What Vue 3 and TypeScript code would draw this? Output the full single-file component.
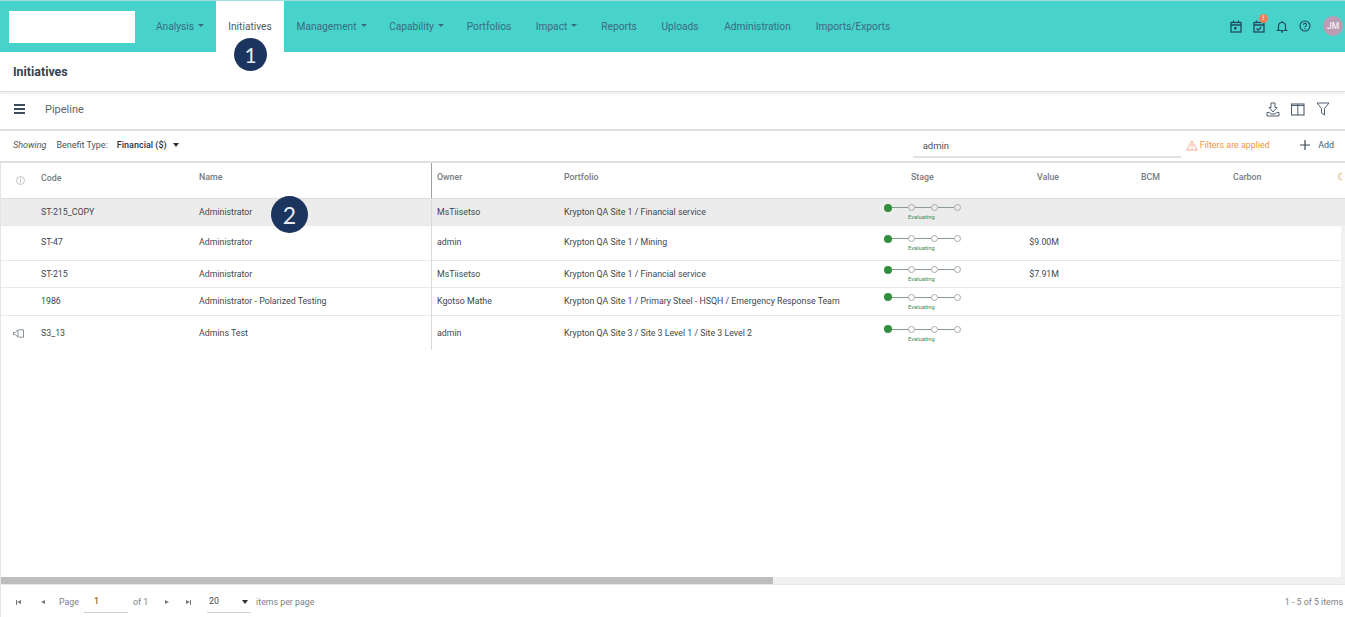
<script setup lang="ts">
interface Row { code: string; name: string; owner: string; portfolio: string; value: string; height: number; active?: boolean; flag?: boolean; low?: boolean }
const navItems: { label: string; caret?: boolean; active?: boolean; width: number }[] = [
  { label: 'Analysis', caret: true, width: 72 },
  { label: 'Initiatives', active: true, width: 68 },
  { label: 'Management', caret: true, width: 95 },
  { label: 'Capability', caret: true, width: 75 },
  { label: 'Portfolios', width: 70 },
  { label: 'Impact', caret: true, width: 65 },
  { label: 'Reports', width: 60 },
  { label: 'Uploads', width: 62 },
  { label: 'Administration', width: 93 },
  { label: 'Imports/Exports', width: 98 },
]
const rows: Row[] = [
  { code: 'ST-215_COPY', name: 'Administrator', owner: 'MsTiisetso', portfolio: 'Krypton QA Site 1 / Financial service', value: '', height: 27, active: true, low: true },
  { code: 'ST-47', name: 'Administrator', owner: 'admin', portfolio: 'Krypton QA Site 1 / Mining', value: '$9.00M', height: 35 },
  { code: 'ST-215', name: 'Administrator', owner: 'MsTiisetso', portfolio: 'Krypton QA Site 1 / Financial service', value: '$7.91M', height: 27, low: true },
  { code: '1986', name: 'Administrator - Polarized Testing', owner: 'Kgotso Mathe', portfolio: 'Krypton QA Site 1 / Primary Steel - HSQH / Emergency Response Team', value: '', height: 28 },
  { code: 'S3_13', name: 'Admins Test', owner: 'admin', portfolio: 'Krypton QA Site 3 / Site 3 Level 1 / Site 3 Level 2', value: '', height: 35, flag: true },
]
</script>

<template>
  <div class="page">
    <header class="nav">
      <div class="logo"></div>
      <nav class="menu">
        <a v-for="item in navItems" :key="item.label" class="menu-item" :class="{ active: item.active }" :style="{ width: item.width + 'px' }">
          {{ item.label }}<i v-if="item.caret" class="caret"></i>
        </a>
      </nav>
      <div class="nav-icons">
        <svg width="12" height="13" viewBox="0 0 12 13" fill="none" stroke="#1f4a63" stroke-width="1.3"><rect x="1" y="2.5" width="10" height="9.5"/><path d="M1 5h10M3.5 .5v2M8.500 .5v2"/><rect x="4" y="7" width="2.500" height="2.500" fill="#1f4a63" stroke="none"/></svg>
        <span class="task">
          <svg width="12" height="13" viewBox="0 0 12 13" fill="none" stroke="#1f4a63" stroke-width="1.3"><rect x="1" y="2.500" width="10" height="9.500"/><path d="M1 5h10M3.500 .5v2M8.500 .5v2M3.500 8.500l1.700 1.500 3-3"/></svg>
          <b class="badge">!</b>
        </span>
        <svg width="12" height="13" viewBox="0 0 12 13" fill="none" stroke="#1f4a63" stroke-width="1.2"><path d="M2.500 9.500V6a3.500 3.500 0 0 1 7 0v3.500l1 1h-9zM5 11.800h2M6 1v1"/></svg>
        <svg class="help" width="12" height="12" viewBox="0 0 12 12" fill="none" stroke="#1f4a63" stroke-width="1.100"><circle cx="6" cy="6" r="5"/><path d="M4.500 4.800a1.500 1.500 0 1 1 2.300 1.300c-.6.400-.8.600-.8 1.200M6 8.200v1"/></svg>
        <span class="avatar">JM</span>
      </div>
    </header>
    <span class="pin pin-1">1</span>

    <div class="title-bar">Initiatives</div>

    <div class="pipeline-bar">
      <span class="burger"><i></i><i></i><i></i></span>
      <span class="pipeline-label">Pipeline</span>
      <div class="tool-icons">
        <svg width="14" height="15" viewBox="0 0 14 15" fill="none" stroke="#4f6070" stroke-width="1"><path d="M5 1h4v4.500h2L7 10 3 5.500h2zM1 10.500h2.500L5 12h4l1.500-1.500H13V14H1z"/></svg>
        <svg width="14" height="13" viewBox="0 0 14 13" fill="none" stroke="#4f6070" stroke-width="1"><rect x=".5" y="1" width="12.500" height="11" stroke-width="1.100"/><path d="M.5 2.500H13M6.800 1v11"/></svg>
        <svg width="14" height="14" viewBox="0 0 14 14" fill="none" stroke="#4f6070" stroke-width="1"><path d="M1 1h12L8.500 6.500V13l-3-2V6.500z"/></svg>
      </div>
    </div>

    <div class="filter-bar">
      <em class="showing">Showing</em>
      <span class="benefit">Benefit Type:</span>
      <strong class="financial">Financial ($)</strong>
      <i class="caret dark"></i>
      <div class="search">admin</div>
      <svg class="warn" width="12" height="11" viewBox="0 0 12 11" fill="none" stroke="#f3a78c" stroke-width="1"><path d="M6 1 .8 10h10.400zM6 4v3.500M6 8.200v.9"/></svg>
      <span class="filters-applied">Filters are applied</span>
      <svg class="plus" width="10" height="10" viewBox="0 0 10 10" stroke="#3b4a55" stroke-width="1.200"><path d="M5 0v10M0 5h10"/></svg>
      <span class="add">Add</span>
    </div>

    <section class="table">
      <div class="row head">
        <span class="cell-icon">
          <svg width="9" height="9" viewBox="0 0 9 9" fill="none" stroke="#b5b5b5" stroke-width=".8"><circle cx="4.500" cy="4.500" r="4"/><path d="M4.500 2v.8M4.500 3.700V7"/></svg>
        </span>
        <span class="code-head">Code</span><span>Name</span><span class="owner">Owner</span><span>Portfolio</span>
        <span class="stage-head">Stage</span><span class="value">Value</span><span class="bcm">BCM</span><span>Carbon</span>
        <span class="cut">C</span>
      </div>
      <div v-for="row in rows" :key="row.code" class="row" :class="{ active: row.active, final: row.flag, low: row.low }" :style="{ height: row.height + 'px' }">
        <span class="cell-icon">
          <svg v-if="row.flag" width="11" height="9" viewBox="0 0 11 9" fill="none" stroke="#6b7780" stroke-width=".8"><path d="M.5 3.300h2L5 1v7L2.500 5.700h-2zM5.500 .8h5v7.400h-5"/></svg>
        </span>
        <span>{{ row.code }}</span><span>{{ row.name }}</span><span class="owner">{{ row.owner }}</span><span>{{ row.portfolio }}</span>
        <span class="stage">
          <span class="track"><i class="dot done"></i><i class="line"></i><i class="dot"></i><i class="line"></i><i class="dot"></i><i class="line"></i><i class="dot"></i></span>
          <small>Evaluating</small>
        </span>
        <span class="value">{{ row.value }}</span><span></span><span></span>
      </div>
      <span class="divider"></span>
      <span class="v-track"></span>
      <span class="pin pin-2">2</span>
      <div class="h-track"><div class="h-thumb"></div></div>
    </section>

    <footer class="pager">
      <div class="pager-left">
        <span class="pg first"><i class="bar"></i><i class="tri left"></i></span>
        <span class="pg prev"><i class="tri left"></i></span>
        <span class="page-word">Page</span>
        <span class="page-input">1</span>
        <span class="of">of 1</span>
        <span class="pg next"><i class="tri right"></i></span>
        <span class="pg last"><i class="tri right"></i><i class="bar"></i></span>
        <span class="size-select">20<i class="caret dark"></i></span>
        <span class="per-page">items per page</span>
      </div>
      <span class="count">1 - 5 of 5 items</span>
    </footer>
  </div>
</template>

<style>
html, body { margin: 0; background: #fff; overflow: hidden; }
</style>

<style scoped>
.page { position: relative; width: 1345px; height: 617px; display: flex; flex-direction: column; font-family: Roboto, "Liberation Sans", sans-serif; font-size: 8.800px; color: #41474d; background: #fff; overflow: hidden; }

.nav { flex: 0 0 52px; box-sizing: border-box; display: flex; align-items: stretch; background: #47d2cb; border-top: 1px solid #a5dfdc; }
.logo { flex: 0 0 126px; height: 32px; margin: 10px 0 0 9px; background: #fff; }
.menu { display: flex; margin-left: 9px; }
.menu-item { box-sizing: border-box; display: flex; align-items: center; justify-content: center; font-size: 10.200px; color: #3c6b80; padding-bottom: 1px; white-space: nowrap; }
.menu-item.active { background: #fff; color: #4a5a68; }
.caret { display: inline-block; width: 0; height: 0; margin-left: 4px; border-left: 3px solid transparent; border-right: 3px solid transparent; border-top: 3px solid #3c6b80; position: relative; top: -1px; }
.caret.dark { border-top-color: #2d3238; }
.nav-icons { margin-left: auto; display: flex; align-items: center; padding-right: 2px; padding-bottom: 1px; }
.nav-icons > svg, .task { margin-right: 11px; }
.task { position: relative; display: flex; }
.help { margin-right: 12px !important; }
.badge { position: absolute; top: -6px; left: 6px; width: 9px; height: 9px; border-radius: 50%; background: #f0805a; color: #fff; font-size: 7px; font-weight: 400; line-height: 9px; text-align: center; }
.avatar { width: 20px; height: 20px; border-radius: 50%; background: #bb9db3; color: #f4eef3; font-size: 8.500px; font-weight: 500; display: flex; align-items: center; justify-content: center; }

.pin { position: absolute; border-radius: 50%; background: #1c355e; color: #e8edf3; display: flex; align-items: center; justify-content: center; font-family: Lato, sans-serif; z-index: 3; }
.pin-1 { left: 234px; top: 38px; width: 33px; height: 33px; font-size: 21px; }
.pin-2 { left: 270px; top: 33px; width: 37px; height: 37px; font-size: 23px; }

.title-bar { flex: 0 0 40px; box-sizing: border-box; padding: 12px 0 0 13px; font-size: 12.400px; font-weight: 700; color: #36424f; border-bottom: 1px solid #dcdcdc; box-shadow: 0 2px 3px rgba(0,0,0,.08); position: relative; z-index: 1; }

.pipeline-bar { flex: 0 0 39px; box-sizing: border-box; display: flex; align-items: center; padding: 0 15px 3px 14px; border-bottom: 2px solid #dfdfdf; }
.burger { display: flex; flex-direction: column; gap: 2.700px; width: 11px; }
.burger i { display: block; height: 1.300px; background: #3c4d5e; }
.pipeline-label { margin-left: 20px; font-size: 11px; color: #5a6772; }
.tool-icons { margin-left: auto; display: flex; align-items: center; gap: 11px; }

.filter-bar { flex: 0 0 32px; box-sizing: border-box; display: flex; align-items: center; padding: 0 11px 2px 13px; border-bottom: 2px solid #dfdfdf; }
.showing { font-size: 9px; color: #4f555a; }
.benefit { margin-left: 10px; font-size: 9px; color: #4f555a; }
.financial { margin-left: 9px; font-size: 9px; font-weight: 500; color: #2d3238; }
.filter-bar .caret { margin-left: 6px; border-top-width: 4px; top: 0; }
.search { box-sizing: border-box; margin-left: 734px; width: 268px; height: 24px; padding: 6px 0 0 10px; font-size: 9.500px; color: #4d5358; border-bottom: 2px solid #e2e2e2; position: relative; top: 1px; }
.warn { margin-left: 5px; }
.filters-applied { margin-left: 2px; font-size: 8.900px; color: #f7933f; }
.plus { margin-left: auto; }
.add { margin-left: 8px; font-size: 8.900px; color: #4a5a68; }

.table { position: relative; flex: 1; border-left: 1px solid #e4e4e4; min-height: 0; }
.row { display: grid; grid-template-columns: 40px 158px 232px 133px 320px 115px 60px 174px 112px; grid-template-rows: 1fr; align-items: center; box-sizing: border-box; border-bottom: 1px solid #e8e8e8; white-space: nowrap; }
.row.final { border-bottom: 0; }
.row > span { padding-bottom: 2px; }
.row.low > span { padding-bottom: 1px; }
.row > .owner { padding-left: 6px; }
.row.head { height: 36px; font-weight: 500; color: #757c82; border-bottom: 1px solid #dedede; }
.row.head > span { padding-bottom: 7px; }
.row.head > .code-head { padding-bottom: 6px; }
.row.head > .cell-icon { padding: 0 0 0 15px; }
.row.active { background: #ececec; }
.cell-icon { display: flex; justify-content: flex-start; padding-left: 12px; padding-top: 2px; }
.row .cell-icon svg { display: block; }
.stage-head { padding-left: 27px; }
.value { text-align: right; }
.bcm { padding-left: 82px; }
.cut { color: #f0b48c; position: absolute; left: 1337px; width: 4px; overflow: hidden; }
.row > .stage, .row.low > .stage { display: flex; flex-direction: column; padding-bottom: 0; }
.track { display: flex; align-items: center; height: 9px; }
.dot { flex: none; box-sizing: border-box; width: 7px; height: 7px; border-radius: 50%; border: 1px solid #a6aca8; background: #fff; }
.row.active .dot:not(.done) { background: #ececec; }
.dot.done { width: 8px; height: 8px; background: #2f8f3c; border: 0; }
.line { flex: none; width: 16px; height: 1px; background: #8a9a90; }
.stage small { font-size: 5.800px; line-height: 7px; color: #3c8a4f; margin: 2px 0 0 24px; }

.divider { position: absolute; left: 430px; top: 0; height: 187px; width: 1px; background: linear-gradient(#a0a0a0 35px, #d9d9d9 35px); }
.v-track { position: absolute; right: 0; top: 62px; width: 4px; bottom: 7px; background: #f1f1f1; }
.h-track { position: absolute; left: 0; right: 0; bottom: 0; height: 7px; background: #f0f0f0; }
.h-thumb { width: 772px; height: 100%; background: #bdbdbd; }

.pager { flex: 0 0 33px; box-sizing: border-box; display: flex; align-items: center; justify-content: space-between; padding: 2px 2px 0 14px; border-left: 1px solid #e4e4e4; border-top: 1px solid #e8e8e8; color: #7b8186; }
.pager-left { display: flex; align-items: center; }
.pg { display: flex; align-items: center; justify-content: center; gap: 0; width: 7px; height: 8px; }
.bar { width: 1px; height: 5px; background: #747a80; }
.tri { width: 0; height: 0; border-top: 2.500px solid transparent; border-bottom: 2.500px solid transparent; }
.tri.left { border-right: 4px solid #747a80; }
.tri.right { border-left: 4px solid #747a80; }
.prev { margin-left: 17px; }
.page-word { margin-left: 13px; }
.page-input { box-sizing: border-box; width: 44px; height: 21px; margin-left: 5px; padding: 4px 0 0 10px; color: #9a6a10; font-weight: 500; border-bottom: 1px solid #cfcfcf; }
.of { margin-left: 5px; }
.next { margin-left: 15px; }
.last { margin-left: 15px; }
.size-select { box-sizing: border-box; display: flex; justify-content: space-between; width: 44px; height: 21px; margin-left: 15px; padding: 4px 3px 0 2px; color: #444a50; border-bottom: 1px solid #cfcfcf; }
.size-select .caret { top: 4px; border-top-width: 4px; }
.per-page { margin-left: 5px; }
.count { color: #7b8186; }
</style>
